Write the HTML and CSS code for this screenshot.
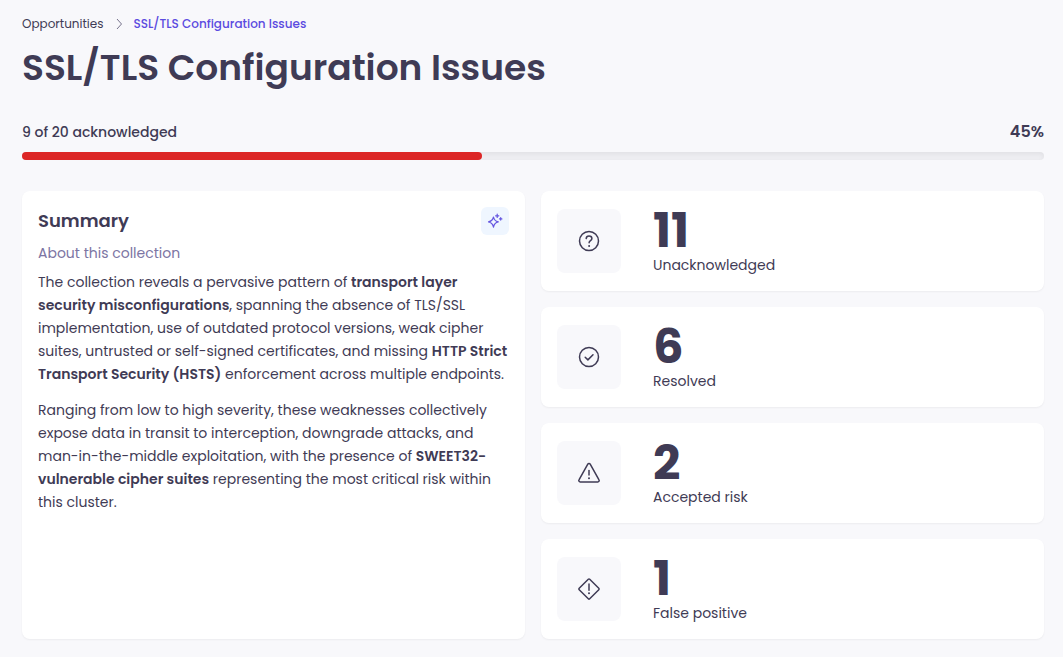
FILE: index.html
```html
<!DOCTYPE html>
<html lang="en">
<head>
  <meta charset="UTF-8">
  <meta name="viewport" content="width=device-width, initial-scale=1.0">
  <title>SSL/TLS Configuration Issues</title>
  <link rel="stylesheet" href="styles.css">
</head>
<body>
  <main class="page">
    <nav class="breadcrumb" aria-label="Breadcrumb">
      <a href="#">Opportunities</a>
      <svg class="chevron" viewBox="0 0 8 12" aria-hidden="true"><path d="M2 1l4.500 5L2 11"/></svg>
      <a href="#" class="current" aria-current="page">SSL/TLS Configuration Issues</a>
    </nav>
    <h1>SSL/TLS Configuration Issues</h1>

    <div class="progress-info">
      <span class="progress-label">9 of 20 acknowledged</span>
      <span class="progress-value">45%</span>
    </div>
    <div class="progress" role="progressbar" aria-label="Acknowledged" aria-valuenow="45" aria-valuemin="0" aria-valuemax="100">
      <div class="progress-bar" style="width: 45%"></div>
    </div>

    <div class="content">
      <section class="card summary">
        <div class="summary-header">
          <h2>Summary</h2>
          <button type="button" class="ai-button" aria-label="AI summary">
            <svg class="sparkle" viewBox="0 0 16 16" aria-hidden="true">
              <path d="M6.500 4C7.100 7 8.300 8.200 11.300 8.900 8.300 9.600 7.100 10.900 6.500 14.100 5.800 10.900 4.600 9.600 1.500 8.900 4.600 8.200 5.800 7 6.500 4z"/>
              <path d="M10.200 1.200v3.200M8.600 2.800h3.200M13.700 4.700v2.400M12.500 5.900h2.400"/>
            </svg>
          </button>
        </div>
        <p class="subtitle">About this collection</p>
        <div class="summary-text">
          <p>The collection reveals a pervasive pattern of <strong>transport layer security misconfigurations</strong>, spanning the absence of TLS/SSL implementation, use of outdated protocol versions, weak cipher suites, untrusted or self-signed certificates, and missing <strong>HTTP Strict Transport Security (HSTS)</strong> enforcement across multiple endpoints.</p>
          <p>Ranging from low to high severity, these weaknesses collectively expose data in transit to interception, downgrade attacks, and man-in-the-middle exploitation, with the presence of <strong>SWEET32-vulnerable cipher suites</strong> representing the most critical risk within this cluster.</p>
        </div>
      </section>

      <div class="stats">
        <div class="card stat">
          <div class="stat-icon">
            <svg viewBox="0 0 24 24" aria-hidden="true">
              <circle cx="12" cy="12" r="9.500"/>
              <path d="M9.200 9.600c.1-1.600 1.200-2.600 2.800-2.600s2.900 1 2.900 2.500c0 2.100-2.800 2.200-2.800 4.300"/>
              <circle class="dot" cx="12.100" cy="16.900" r="1"/>
            </svg>
          </div>
          <div>
            <div class="stat-number">11</div>
            <div class="stat-label">Unacknowledged</div>
          </div>
        </div>
        <div class="card stat">
          <div class="stat-icon">
            <svg viewBox="0 0 24 24" aria-hidden="true">
              <circle cx="12" cy="12" r="9.500"/>
              <path d="M8.200 12.300l2.700 2.600 5.100-5.200"/>
            </svg>
          </div>
          <div>
            <div class="stat-number">6</div>
            <div class="stat-label">Resolved</div>
          </div>
        </div>
        <div class="card stat">
          <div class="stat-icon">
            <svg viewBox="0 0 24 24" aria-hidden="true">
              <path d="M10.800 3.200L2 18.800c-.6 1 .1 2.100 1.200 2.100h17.600c1.100 0 1.800-1.100 1.200-2.100L13.200 3.200c-.5-.9-1.900-.9-2.400 0z"/>
              <path d="M12 9.600v4.300"/>
              <circle class="dot" cx="12" cy="17.200" r="1"/>
            </svg>
          </div>
          <div>
            <div class="stat-number">2</div>
            <div class="stat-label">Accepted risk</div>
          </div>
        </div>
        <div class="card stat">
          <div class="stat-icon">
            <svg viewBox="0 0 24 24" aria-hidden="true">
              <path d="M11.300 2.200L2.200 11.300c-.4.4-.4 1 0 1.400l9.100 9.100c.4.4 1 .4 1.400 0l9.100-9.100c.4-.4.4-1 0-1.400l-9.100-9.100c-.4-.4-1-.4-1.400 0z"/>
              <path d="M12 7v6.300"/>
              <circle class="dot" cx="12" cy="16.300" r="1"/>
            </svg>
          </div>
          <div>
            <div class="stat-number">1</div>
            <div class="stat-label">False positive</div>
          </div>
        </div>
      </div>
    </div>
  </main>
</body>
</html>
```
FILE: styles.css
```css
* {
  box-sizing: border-box;
}
body {
  margin: 0;
  background-color: #f8f8fb;
  color: #3f3b55;
  font-family: Poppins, Inter, sans-serif;
  font-size: 14px;
}
h1, h2, p {
  margin: 0;
}
.page {
  padding: 14px 19px 18px 22px;
}
.breadcrumb {
  display: flex;
  align-items: center;
  gap: 11px;
  font-size: 12px;
  line-height: 20px;
}
.breadcrumb a {
  color: inherit;
  text-decoration: none;
}
.breadcrumb .current {
  color: #5b4be0;
  font-weight: 500;
}
.chevron {
  width: 8px;
  height: 12px;
  fill: none;
  stroke: #77738c;
}
h1 {
  margin-top: 8px;
  font-size: 36px;
  line-height: 52px;
  font-weight: 600;
}
.progress-info {
  display: flex;
  justify-content: space-between;
  align-items: center;
  margin-top: 26px;
  line-height: 24px;
}
.progress-label {
  font-weight: 500;
}
.progress-value {
  font-size: 16px;
  font-weight: 600;
}
.progress {
  height: 8px;
  margin-top: 8px;
  border-radius: 4px;
  background-color: #ededf1;
  box-shadow: inset 0 2px 4px rgba(0, 0, 0, 0.05);
}
.progress-bar {
  height: 100%;
  border-radius: 4px;
  background-color: #dc2626;
}
.content {
  display: grid;
  grid-template-columns: 1fr 1fr;
  gap: 16px;
  margin-top: 31px;
}
.card {
  background-color: #fff;
  border-radius: 8px;
  box-shadow: 0 1px 2px rgba(0, 0, 0, 0.05);
}
.summary {
  padding: 16px;
}
.summary-header {
  display: flex;
  justify-content: space-between;
  align-items: center;
}
h2 {
  font-size: 18px;
  line-height: 28px;
  font-weight: 600;
}
.ai-button {
  display: flex;
  align-items: center;
  justify-content: center;
  width: 28px;
  height: 28px;
  padding: 0;
  border: none;
  border-radius: 6px;
  background-color: #eff6ff;
  cursor: pointer;
}
.sparkle {
  width: 16px;
  height: 16px;
  fill: none;
  stroke: #6556e0;
  stroke-width: 1.2;
  stroke-linecap: round;
  stroke-linejoin: round;
}
.subtitle {
  margin-top: 8px;
  color: #7c75a3;
  line-height: 20px;
}
.summary-text {
  margin-top: 8px;
  line-height: 23px;
}
.summary-text p + p {
  margin-top: 13px;
}
.summary-text strong {
  font-weight: 600;
}
.stats {
  display: flex;
  flex-direction: column;
  gap: 16px;
}
.stat {
  display: flex;
  align-items: center;
  gap: 32px;
  padding: 16px;
  min-height: 100px;
}
.stat-icon {
  display: flex;
  align-items: center;
  justify-content: center;
  width: 64px;
  height: 64px;
  border-radius: 8px;
  background-color: #f8f8fb;
}
.stat-icon svg {
  width: 24px;
  height: 24px;
  fill: none;
  stroke: #3f3b55;
  stroke-width: 1.5;
  stroke-linecap: round;
  stroke-linejoin: round;
}
.stat-icon .dot {
  fill: #3f3b55;
  stroke: none;
}
.stat-number {
  font-size: 48px;
  line-height: 48px;
  font-weight: 700;
}
.stat-label {
  line-height: 20px;
}
```
